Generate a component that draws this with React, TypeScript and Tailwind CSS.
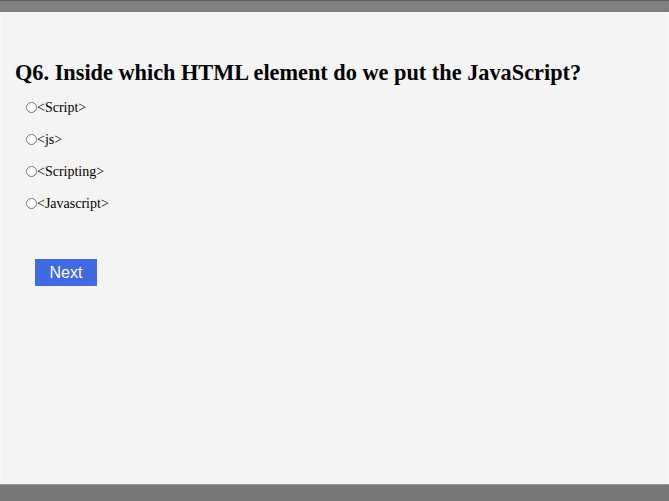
import React from "react";

const options = ["<Script>", "<js>", "<Scripting>", "<Javascript>"];

export default function App() {
  return (
    <div className="flex h-[501px] w-[669px] flex-col bg-[#f4f4f4]">
      <div className="h-[12px] shrink-0 border-t border-[#5c5c5c] bg-[#808080]" />
      <div className="flex flex-1 flex-col border-x border-[#fafafa] px-[14px]">
        <h2
          className="mt-[49px] text-[22.3px] font-bold leading-[24px] text-black"
          style={{ fontFamily: '"Liberation Serif", serif' }}
        >
          Q6. Inside which HTML element do we put the JavaScript?
        </h2>
        <div className="mt-[14px] flex flex-col gap-[16px] pl-[11px]">
          {options.map((o) => (
            <label
              key={o}
              className="flex h-[16px] items-center text-[14px] text-black"
              style={{ fontFamily: '"Liberation Serif", serif' }}
            >
              <input type="radio" name="q" className="m-0 h-[11px] w-[11px]" />
              <span>{o}</span>
            </label>
          ))}
        </div>
        <div className="mt-[48px] pl-[20px]">
          <button
            className="h-[27px] w-[62px] bg-[#4169e1] text-[16px] text-white"
            style={{ fontFamily: '"Liberation Sans", Arial, sans-serif' }}
          >
            Next
          </button>
        </div>
      </div>
      <div className="h-[17px] shrink-0 border-t border-[#9a9a9a] bg-[#767676]" />
    </div>
  );
}
